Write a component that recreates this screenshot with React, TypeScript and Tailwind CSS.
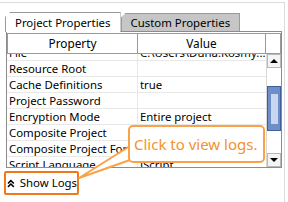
const rows = [
  { name: "File", value: "C:\\Users\\Duna.Kosmy..." },
  { name: "Resource Root", value: "" },
  { name: "Cache Definitions", value: "true" },
  { name: "Project Password", value: "" },
  { name: "Encryption Mode", value: "Entire project" },
  { name: "Composite Project", value: "" },
  { name: "Composite Project Format", value: "" },
  { name: "Script Language", value: "JScript" },
];

function Tab({ label, active }: { label: string; active?: boolean }) {
  return (
    <div
      className={`relative flex items-center border border-b-0 border-[#9a9a9a] px-[9px] ${
        active ? "h-[20px] bg-white z-10 -mb-px" : "h-[18px] bg-[#c6c6c6]"
      }`}
      style={{ clipPath: "polygon(5px 0, 100% 0, 100% 100%, 0 100%, 0 5px)" }}
    >
      <span className="whitespace-nowrap">{label}</span>
    </div>
  );
}

function ScrollBar() {
  return (
    <div className="flex flex-col w-[15px] h-full bg-white border-l border-[#d8d8d8]">
      <div className="h-[14px] flex items-center justify-center border border-[#b8b8b8] bg-[#f4f4f4]">
        <div className="w-0 h-0 border-x-[4px] border-x-transparent border-b-[4px] border-b-black" />
      </div>
      <div className="h-[18px]" />
      <div className="h-[45px] border border-[#3d5fa0] bg-[#6e8ec8] flex items-center justify-center">
        <div
          className="w-[7px] h-[30px]"
          style={{
            backgroundImage: "radial-gradient(#c8d6f0 0.8px, transparent 0.9px)",
            backgroundSize: "2px 2px",
          }}
        />
      </div>
      <div className="flex-1" />
      <div className="h-[14px] flex items-center justify-center border border-[#b8b8b8] bg-[#f4f4f4]">
        <div className="w-0 h-0 border-x-[4px] border-x-transparent border-t-[4px] border-t-black" />
      </div>
    </div>
  );
}

export default function App() {
  return (
    <div
      className="relative w-[288px] h-[202px] bg-white overflow-hidden text-[11.4px] text-black"
      style={{ fontFamily: '"Noto Sans", "Open Sans", sans-serif' }}
    >
      <div className="absolute left-0 top-[2px] w-[285px] h-[200px] border-t border-r border-[#dcdcdc]" />

      <div className="flex items-end pt-[11px] pl-[5px] h-[31px] relative">
        <Tab label="Project Properties" active />
        <Tab label="Custom Properties" />
      </div>

      <div className="ml-[6px] w-[276px] h-[137px] border border-[#8c8c8c] bg-white flex flex-col relative">
        <div className="flex h-[21px] mt-[1px] leading-none text-[11.8px]">
          <div className="w-[131px] border border-[#9a9a9a] flex items-center justify-center">Property</div>
          <div className="w-[128px] border border-l-0 border-[#9a9a9a] flex items-center justify-center">Value</div>
          <div className="w-[15px] border border-l-0 border-[#9a9a9a]" />
        </div>
        <div className="flex flex-1 min-h-0">
          <div className="flex-1 overflow-hidden">
            <div className="-mt-[9px]">
              {rows.map((r) => (
                <div key={r.name} className="flex h-[16px] border-b border-[#e8e8e8] leading-[15px]">
                  <div className="w-[131px] pl-[2px] whitespace-nowrap overflow-hidden border-r border-[#e8e8e8]">{r.name}</div>
                  <div className="flex-1 pl-[2px] whitespace-nowrap overflow-hidden">{r.value}</div>
                </div>
              ))}
            </div>
          </div>
          <ScrollBar />
        </div>
      </div>

      <div className="ml-[4px] mt-[3px] w-[75px] h-[24px] border-2 border-[#f07a1a] rounded-[2px] flex items-center gap-[5px] pl-[1px]">
        <svg width="8" height="9" viewBox="0 0 8 9" fill="none" stroke="black" strokeWidth="1.6">
          <path d="M1 4.5 L4 1.5 L7 4.5" />
          <path d="M1 8 L4 5 L7 8" />
        </svg>
        <span className="whitespace-nowrap">Show Logs</span>
      </div>

      <svg className="absolute left-0 top-0" width="288" height="202">
        <polygon points="130,146 79,178 130,160" fill="white" stroke="#f9a24a" strokeWidth="2" strokeLinejoin="round" />
      </svg>
      <div className="absolute left-[128px] top-[125px] w-[137px] h-[38px] border-2 border-[#f9a24a] rounded-[5px] bg-white flex items-center pl-[4px] text-[15px] text-[#f5912e] whitespace-nowrap">
        Click to view logs.
      </div>
    </div>
  );
}
